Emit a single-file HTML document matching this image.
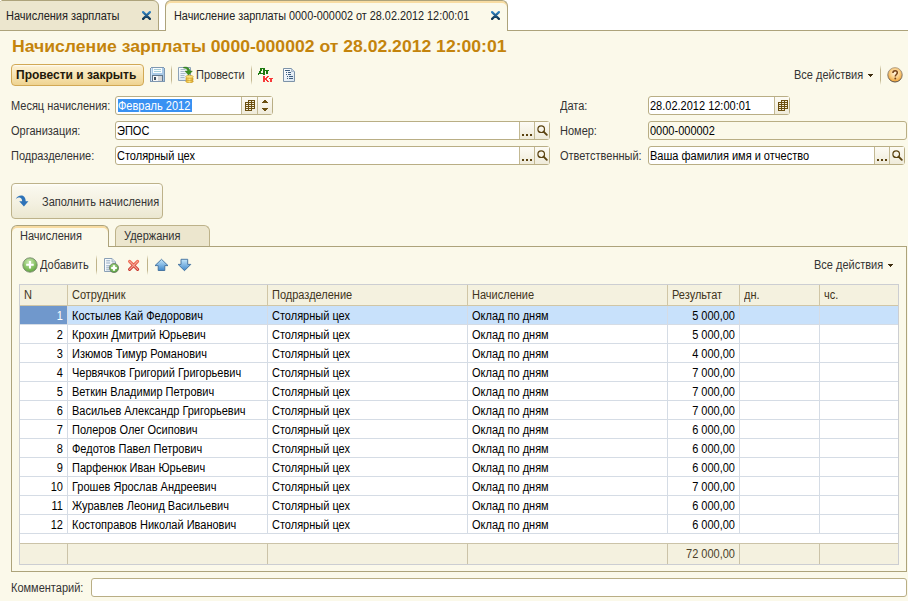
<!DOCTYPE html>
<html><head><meta charset="utf-8">
<style>
*{box-sizing:border-box;margin:0;padding:0}
html,body{width:908px;height:601px;overflow:hidden}
body{position:relative;background:#FBF9EA;font-family:"Liberation Sans",sans-serif;font-size:12px;color:#333;line-height:13px}
.a{position:absolute;white-space:nowrap}
.t{position:absolute;white-space:nowrap;font-size:12px;line-height:13px;transform:scaleX(0.917);transform-origin:0 0}
.t.r{text-align:right;transform-origin:100% 0}
.sep{position:absolute;width:1px;background:linear-gradient(rgba(190,175,130,0),#BFB38A 25%,#BFB38A 75%,rgba(190,175,130,0))}
</style></head><body>

<div class="a" style="left:0px;top:0px;width:908px;height:31px;background:#fff;border-bottom:1px solid #ADA37B"></div>
<div class="a" style="left:-6px;top:0px;width:165px;height:31px;border:1px solid #ADA37B;border-radius:6px 6px 0 0;background:#ECE6CE"></div>
<div class="a" style="left:0px;top:0px;width:1px;height:1px;background:#fff"></div>
<div class="a" style="left:1px;top:0px;width:1px;height:1px;background:#D6CEB0"></div>
<div class="a" style="left:0px;top:1px;width:1px;height:1px;background:#D6CEB0"></div>
<div class="t" style="left:6px;top:10px;color:#222;">Начисления зарплаты</div>
<svg class="a" style="left:142px;top:11px" width="9" height="9" viewBox="0 0 9 9"><defs><linearGradient id="xg142" x1="0" y1="0" x2="0" y2="1"><stop offset="0" stop-color="#2F82C2"/><stop offset="1" stop-color="#0F3350"/></linearGradient></defs><path d="M1.1 1.1L7.9 7.9M7.9 1.1L1.1 7.9" stroke="url(#xg142)" stroke-width="2.2" stroke-linecap="round"/></svg>
<div class="a" style="left:165px;top:0px;width:343px;height:31px;border:1px solid #ADA37B;border-bottom:none;border-radius:6px 6px 0 0;background:#FBF9EA;box-shadow:inset 0 2px 0 #F8DCA2"></div>
<div class="t" style="left:174px;top:10px;color:#222;transform:scaleX(0.904)">Начисление зарплаты 0000-000002 от 28.02.2012 12:00:01</div>
<svg class="a" style="left:491px;top:11px" width="9" height="9" viewBox="0 0 9 9"><defs><linearGradient id="xg491" x1="0" y1="0" x2="0" y2="1"><stop offset="0" stop-color="#2F82C2"/><stop offset="1" stop-color="#0F3350"/></linearGradient></defs><path d="M1.1 1.1L7.9 7.9M7.9 1.1L1.1 7.9" stroke="url(#xg491)" stroke-width="2.2" stroke-linecap="round"/></svg>
<div class="a" style="left:12px;top:35px;font-size:16.5px;line-height:22px;font-weight:bold;color:#C4840C;transform:scaleX(1.066);transform-origin:0 0">Начисление зарплаты 0000-000002 от 28.02.2012 12:00:01</div>
<div class="a" style="left:11px;top:64px;width:133px;height:22px;border:1px solid #D2A955;border-radius:4px;background:linear-gradient(#FFFDF6 0px,#FBEFCF 2px,#F6E2AE 60%,#EED391)"></div>
<div class="a" style="left:16px;top:69px;font-size:12px;line-height:13px;font-weight:bold;color:#22180A">Провести и закрыть</div>
<svg class="a" style="left:150px;top:67px;shape-rendering:crispEdges" width="15" height="15" viewBox="0 0 15 15">
 <rect x="0" y="0" width="15" height="15" fill="#7F98B2"/>
 <rect x="1" y="1" width="13" height="13" fill="#A9C9E6"/>
 <rect x="1" y="1" width="1" height="13" fill="#D3E5F4"/>
 <rect x="3" y="1" width="9" height="5" fill="#FAFCFD"/>
 <rect x="4" y="2" width="7" height="1" fill="#A6CFD9"/>
 <rect x="4" y="4" width="7" height="1" fill="#A6CFD9"/>
 <rect x="2" y="8" width="11" height="6" fill="#62778C"/>
 <rect x="3" y="9" width="9" height="5" fill="#F6F6F6"/>
 <rect x="8" y="9" width="4" height="5" fill="#D6D6D6"/>
 <rect x="4" y="10" width="2" height="3" fill="#3E4E60"/>
 <rect x="0" y="0" width="1" height="1" fill="#FBF9EC"/><rect x="14" y="0" width="1" height="1" fill="#FBF9EC"/>
</svg>
<div class="sep" style="left:171px;top:65px;height:20px"></div>
<svg class="a" style="left:178px;top:66px" width="16" height="17" viewBox="0 0 16 17">
 <defs><linearGradient id="dg" x1="0" y1="0" x2="0" y2="1"><stop offset="0" stop-color="#FFFFFF"/><stop offset="1" stop-color="#DCE8F3"/></linearGradient>
 <linearGradient id="cg" x1="0" y1="0" x2="1" y2="0"><stop offset="0" stop-color="#E8B830"/><stop offset="0.5" stop-color="#FCE680"/><stop offset="1" stop-color="#D9A020"/></linearGradient></defs>
 <path d="M0.5 1.5H12.5V14.5H0.5Z" fill="url(#dg)" stroke="#8CA2B8"/>
 <path d="M2.5 3.5h5M2.5 5.5h4M2.5 7.5h5M2.5 9.5h4M2.5 11.5h4" stroke="#A9BACB"/>
 <path d="M5.5 1.3C8.8 0.4 11.6 1.8 12 5H14.4L10.6 9.2L6.9 5H9.6C9.3 3.3 7.8 2.2 5.5 2.1Z" fill="#3B8F22" stroke="#2A6E18" stroke-width="0.4"/>
 <ellipse cx="11.5" cy="15.2" rx="3.8" ry="1.5" fill="url(#cg)" stroke="#C89420" stroke-width="0.6"/>
 <ellipse cx="11.5" cy="13" rx="3.8" ry="1.5" fill="url(#cg)" stroke="#C89420" stroke-width="0.6"/>
 <ellipse cx="11.5" cy="10.8" rx="3.8" ry="1.5" fill="#FBE27A" stroke="#C89420" stroke-width="0.6"/>
</svg>
<div class="t" style="left:196px;top:69px;color:#333;">Провести</div>
<div class="sep" style="left:251px;top:65px;height:20px"></div>
<svg class="a" style="left:256px;top:66px;shape-rendering:crispEdges" width="20" height="18" viewBox="0 0 20 18"><g fill="#1C7A10"><rect x="4" y="2" width="5" height="1"/><rect x="4" y="3" width="2" height="1"/><rect x="7" y="3" width="2" height="1"/><rect x="4" y="4" width="2" height="1"/><rect x="7" y="4" width="2" height="1"/><rect x="9" y="4" width="4" height="1"/><rect x="3" y="5" width="2" height="1"/><rect x="7" y="5" width="2" height="1"/><rect x="10" y="5" width="2" height="1"/><rect x="3" y="6" width="2" height="1"/><rect x="7" y="6" width="2" height="1"/><rect x="10" y="6" width="2" height="1"/><rect x="2" y="7" width="7" height="1"/><rect x="10" y="7" width="2" height="1"/><rect x="2" y="8" width="1" height="1"/><rect x="7" y="8" width="2" height="1"/></g><g fill="#F83A3A"><rect x="7" y="10" width="2" height="1"/><rect x="11" y="10" width="2" height="1"/><rect x="7" y="11" width="2" height="1"/><rect x="10" y="11" width="2" height="1"/><rect x="7" y="12" width="4" height="1"/><rect x="13" y="12" width="4" height="1"/><rect x="7" y="13" width="4" height="1"/><rect x="14" y="13" width="2" height="1"/><rect x="7" y="14" width="2" height="1"/><rect x="10" y="14" width="2" height="1"/><rect x="14" y="14" width="2" height="1"/><rect x="7" y="15" width="2" height="1"/><rect x="11" y="15" width="2" height="1"/><rect x="14" y="15" width="2" height="1"/></g></svg>
<svg class="a" style="left:283px;top:68px" width="12" height="14" viewBox="0 0 12 14">
 <defs><linearGradient id="dg2" x1="0" y1="0" x2="1" y2="1"><stop offset="0" stop-color="#FFFFFF"/><stop offset="1" stop-color="#D6E4F0"/></linearGradient></defs>
 <path d="M0.5 0.5H8.5L11.5 3.5V13.5H0.5Z" fill="url(#dg2)" stroke="#7D93A8"/>
 <path d="M8.5 0.5V3.5H11.5" fill="#C8D6E4" stroke="#9DB0C2" stroke-width="0.8"/>
 <g fill="#3E5E80" style="shape-rendering:crispEdges"><rect x="2" y="2" width="5" height="1"/><rect x="3" y="4" width="1" height="1"/><rect x="5" y="4" width="3" height="1"/><rect x="3" y="6" width="1" height="1"/><rect x="5" y="6" width="3" height="1"/><rect x="4" y="8" width="1" height="1"/><rect x="6" y="8" width="4" height="1"/><rect x="4" y="10" width="1" height="1"/><rect x="6" y="10" width="4" height="1"/></g>
</svg>
<div class="t" style="left:794px;top:69px;color:#333;">Все действия</div>
<svg class="a" style="left:868px;top:74px;shape-rendering:crispEdges" width="5" height="3" viewBox="0 0 5 3"><g fill="#3E2E10"><rect x="0" y="0" width="5" height="1"/><rect x="1" y="1" width="3" height="1"/><rect x="2" y="2" width="1" height="1"/></g></svg>
<div class="sep" style="left:880px;top:65px;height:20px"></div>
<svg class="a" style="left:882px;top:62px" width="24" height="26" viewBox="882 62 24 26">
 <defs><radialGradient id="hg" cx="0.5" cy="0.4" r="0.6"><stop offset="0" stop-color="#FFF3DE"/><stop offset="0.55" stop-color="#F9CD84"/><stop offset="1" stop-color="#EE9E30"/></radialGradient>
 <linearGradient id="hb" x1="0" y1="0" x2="0" y2="1"><stop offset="0" stop-color="#B8A890"/><stop offset="1" stop-color="#585048"/></linearGradient></defs>
 <circle cx="895" cy="74.8" r="7.2" fill="url(#hg)" stroke="url(#hb)" stroke-width="1"/>
 <path d="M892.9 73.1C892.9 71.4 894 70.7 895.1 70.7C896.4 70.7 897.3 71.6 897.3 72.7C897.3 74.4 895.3 74.6 895.3 76.6" fill="none" stroke="#76441A" stroke-width="1.5"/>
 <circle cx="895.3" cy="78.5" r="0.95" fill="#76441A"/>
</svg>
<div class="t" style="left:11px;top:100px;color:#333;">Месяц начисления:</div>
<div class="t" style="left:11px;top:125px;color:#333;">Организация:</div>
<div class="t" style="left:11px;top:150px;color:#333;">Подразделение:</div>
<div class="a" style="left:115px;top:96px;width:158px;height:19px;border:1px solid #B9AE85;border-radius:3px;background:#fff"></div>
<div class="a" style="left:118px;top:99px;width:74px;height:13px;background:#3891F2"></div>
<div class="t" style="left:118px;top:100px;color:#fff;">Февраль 2012</div>
<div class="a" style="left:241px;top:97px;width:16px;height:17px;border-left:1px solid #C3B993;background:linear-gradient(#FDFBF4,#EFEBDA)"></div>
<div class="a" style="left:257px;top:97px;width:15px;height:17px;border-left:1px solid #C3B993;background:linear-gradient(#FDFBF4,#EFEBDA)"></div>
<svg class="a" style="left:245px;top:100px;shape-rendering:crispEdges" width="10" height="11" viewBox="0 0 10 11"><path d="M3 0H10V9H7V11H0V2H3Z" fill="#6B4F10"/><g fill="#F4EEDC"><rect x="4" y="1" width="2" height="1"/><rect x="7" y="1" width="2" height="1"/><rect x="1" y="3" width="2" height="1"/><rect x="4" y="3" width="2" height="1"/><rect x="7" y="3" width="2" height="1"/><rect x="1" y="5" width="2" height="1"/><rect x="4" y="5" width="2" height="1"/><rect x="7" y="5" width="2" height="1"/><rect x="1" y="7" width="2" height="1"/><rect x="4" y="7" width="2" height="1"/><rect x="7" y="7" width="2" height="1"/><rect x="1" y="9" width="2" height="1"/><rect x="4" y="9" width="2" height="1"/></g></svg>
<svg class="a" style="left:262px;top:100px;shape-rendering:crispEdges" width="6" height="11" viewBox="0 0 6 11"><g fill="#6B4F10"><rect x="2" y="0" width="2" height="1"/><rect x="1" y="1" width="4" height="1"/><rect x="0" y="2" width="6" height="1"/><rect x="0" y="8" width="6" height="1"/><rect x="1" y="9" width="4" height="1"/><rect x="2" y="10" width="2" height="1"/></g></svg>
<div class="a" style="left:115px;top:121px;width:435px;height:19px;border:1px solid #B9AE85;border-radius:3px;background:#fff"></div>
<div class="t" style="left:117px;top:125px;color:#000;">ЭПОС</div>
<div class="a" style="left:519px;top:122px;width:15px;height:17px;border-left:1px solid #C3B993;background:linear-gradient(#FDFBF4,#EFEBDA)"></div>
<div class="a" style="left:534px;top:122px;width:15px;height:17px;border-left:1px solid #C3B993;background:linear-gradient(#FDFBF4,#EFEBDA)"></div>
<svg class="a" style="left:522px;top:134px;shape-rendering:crispEdges" width="11" height="2" viewBox="0 0 11 2"><g fill="#5A4210"><rect x="0" y="0" width="2" height="2"/><rect x="4" y="0" width="2" height="2"/><rect x="8" y="0" width="2" height="2"/></g></svg>
<svg class="a" style="left:537px;top:125px" width="11" height="11" viewBox="0 0 11 11"><circle cx="4.2" cy="4.2" r="3.3" fill="none" stroke="#5A4210" stroke-width="1.2"/><path d="M6.6 6.6L9.8 9.8" stroke="#5A4210" stroke-width="1.9" stroke-linecap="round"/></svg>
<div class="a" style="left:115px;top:146px;width:435px;height:19px;border:1px solid #B9AE85;border-radius:3px;background:#fff"></div>
<div class="t" style="left:117px;top:150px;color:#000;">Столярный цех</div>
<div class="a" style="left:519px;top:147px;width:15px;height:17px;border-left:1px solid #C3B993;background:linear-gradient(#FDFBF4,#EFEBDA)"></div>
<div class="a" style="left:534px;top:147px;width:15px;height:17px;border-left:1px solid #C3B993;background:linear-gradient(#FDFBF4,#EFEBDA)"></div>
<svg class="a" style="left:522px;top:159px;shape-rendering:crispEdges" width="11" height="2" viewBox="0 0 11 2"><g fill="#5A4210"><rect x="0" y="0" width="2" height="2"/><rect x="4" y="0" width="2" height="2"/><rect x="8" y="0" width="2" height="2"/></g></svg>
<svg class="a" style="left:537px;top:150px" width="11" height="11" viewBox="0 0 11 11"><circle cx="4.2" cy="4.2" r="3.3" fill="none" stroke="#5A4210" stroke-width="1.2"/><path d="M6.6 6.6L9.8 9.8" stroke="#5A4210" stroke-width="1.9" stroke-linecap="round"/></svg>
<div class="t" style="left:560px;top:100px;color:#333;">Дата:</div>
<div class="t" style="left:560px;top:125px;color:#333;">Номер:</div>
<div class="t" style="left:560px;top:150px;color:#333;">Ответственный:</div>
<div class="a" style="left:648px;top:96px;width:142px;height:19px;border:1px solid #B9AE85;border-radius:3px;background:#fff"></div>
<div class="t" style="left:650px;top:100px;color:#000;">28.02.2012 12:00:01</div>
<div class="a" style="left:774px;top:97px;width:15px;height:17px;border-left:1px solid #C3B993;background:linear-gradient(#FDFBF4,#EFEBDA)"></div>
<svg class="a" style="left:778px;top:100px;shape-rendering:crispEdges" width="10" height="11" viewBox="0 0 10 11"><path d="M3 0H10V9H7V11H0V2H3Z" fill="#6B4F10"/><g fill="#F4EEDC"><rect x="4" y="1" width="2" height="1"/><rect x="7" y="1" width="2" height="1"/><rect x="1" y="3" width="2" height="1"/><rect x="4" y="3" width="2" height="1"/><rect x="7" y="3" width="2" height="1"/><rect x="1" y="5" width="2" height="1"/><rect x="4" y="5" width="2" height="1"/><rect x="7" y="5" width="2" height="1"/><rect x="1" y="7" width="2" height="1"/><rect x="4" y="7" width="2" height="1"/><rect x="7" y="7" width="2" height="1"/><rect x="1" y="9" width="2" height="1"/><rect x="4" y="9" width="2" height="1"/></g></svg>
<div class="a" style="left:648px;top:121px;width:259px;height:19px;border:1px solid #B9AE85;border-radius:3px;background:#FBF9EA"></div>
<div class="t" style="left:650px;top:125px;color:#000;">0000-000002</div>
<div class="a" style="left:648px;top:146px;width:257px;height:19px;border:1px solid #B9AE85;border-radius:3px;background:#fff"></div>
<div class="t" style="left:650px;top:150px;color:#000;">Ваша фамилия имя и отчество</div>
<div class="a" style="left:874px;top:147px;width:15px;height:17px;border-left:1px solid #C3B993;background:linear-gradient(#FDFBF4,#EFEBDA)"></div>
<div class="a" style="left:889px;top:147px;width:15px;height:17px;border-left:1px solid #C3B993;background:linear-gradient(#FDFBF4,#EFEBDA)"></div>
<svg class="a" style="left:877px;top:159px;shape-rendering:crispEdges" width="11" height="2" viewBox="0 0 11 2"><g fill="#5A4210"><rect x="0" y="0" width="2" height="2"/><rect x="4" y="0" width="2" height="2"/><rect x="8" y="0" width="2" height="2"/></g></svg>
<svg class="a" style="left:892px;top:150px" width="11" height="11" viewBox="0 0 11 11"><circle cx="4.2" cy="4.2" r="3.3" fill="none" stroke="#5A4210" stroke-width="1.2"/><path d="M6.6 6.6L9.8 9.8" stroke="#5A4210" stroke-width="1.9" stroke-linecap="round"/></svg>
<div class="a" style="left:11px;top:183px;width:152px;height:36px;border:1px solid #BDB28A;border-radius:4px;background:linear-gradient(#FFFFFA 0px,#FAF8EE 3px,#F3F0E0 60%,#EBE7D0)"></div>
<svg class="a" style="left:13px;top:192px" width="18" height="18" viewBox="0 0 18 18">
 <path d="M2.6 7.4C3.8 4.2 7.6 2.6 10.3 3.9C12 4.8 12.7 6.9 12.7 9.3L15.4 9.3L10.9 14.6L6.2 9.3L9.1 9.3C9.1 7.6 8.6 6.4 7.6 5.9C6 5.1 4 5.8 2.6 7.4Z" fill="#2D72B8"/>
</svg>
<div class="t" style="left:42px;top:196px;color:#333;">Заполнить начисления</div>
<div class="a" style="left:115px;top:225px;width:95px;height:22px;border:1px solid #BDB28A;border-bottom:none;border-radius:6px 6px 0 0;background:#ECE6CE"></div>
<div class="t" style="left:124px;top:230px;color:#333;">Удержания</div>
<div class="a" style="left:11px;top:246px;width:896px;height:326px;border:1px solid #ADA37B;background:#FBF9EA"></div>
<div class="a" style="left:11px;top:225px;width:98px;height:22px;border:1px solid #ADA37B;border-bottom:none;border-radius:6px 6px 0 0;background:#FBF9EA;box-shadow:inset 0 2px 0 #F8DCA2"></div>
<div class="t" style="left:20px;top:230px;color:#333;">Начисления</div>
<svg class="a" style="left:22px;top:257px" width="16" height="16" viewBox="0 0 16 16">
 <defs><radialGradient id="pg" cx="0.45" cy="0.3" r="0.75"><stop offset="0" stop-color="#CDEBB5"/><stop offset="0.6" stop-color="#86C062"/><stop offset="1" stop-color="#5A9E3C"/></radialGradient></defs>
 <circle cx="8" cy="8" r="7.2" fill="url(#pg)" stroke="#7A8A72" stroke-width="0.9"/>
 <path d="M8 4v7.5M4.2 7.8h7.5" stroke="#fff" stroke-width="2.1"/>
</svg>
<div class="t" style="left:40px;top:259px;color:#333;">Добавить</div>
<div class="sep" style="left:96px;top:255px;height:20px"></div>
<svg class="a" style="left:104px;top:258px" width="16" height="16" viewBox="0 0 16 16">
 <path d="M0.5 0.5H8L11.5 4V13.5H0.5Z" fill="#F6F9FC" stroke="#8AA0B6"/>
 <path d="M8 0.5V4H11.5" fill="#D0DCE8" stroke="#9DB0C2" stroke-width="0.8"/>
 <path d="M2.2 2.8h4M2.2 5h4M2.2 7.8h4M2.2 9.8h3M2.2 11.8h3" stroke="#90A8C0"/>
 <defs><radialGradient id="cpg" cx="0.45" cy="0.35" r="0.7"><stop offset="0" stop-color="#A8DA88"/><stop offset="1" stop-color="#4E9A34"/></radialGradient></defs>
 <circle cx="10" cy="10" r="4.6" fill="url(#cpg)" stroke="#6A7A66" stroke-width="0.8"/>
 <path d="M10 7.2v5.6M7.2 10h5.6" stroke="#fff" stroke-width="2.2"/>
</svg>
<svg class="a" style="left:127px;top:259px" width="13" height="13" viewBox="0 0 13 13">
 <defs><linearGradient id="xr" x1="0" y1="0" x2="0" y2="1"><stop offset="0" stop-color="#F06A50"/><stop offset="1" stop-color="#C8362E"/></linearGradient></defs><path d="M2.6 2.4L10.6 10.4M10.6 2.4L2.6 10.4" stroke="url(#xr)" stroke-width="3.1" stroke-linecap="round"/>
 <path d="M2.6 2.4L10.6 10.4M10.6 2.4L2.6 10.4" stroke="#F5A898" stroke-width="1.1" stroke-linecap="round"/>
</svg>
<div class="sep" style="left:147px;top:255px;height:20px"></div>
<svg class="a" style="left:154px;top:258px" width="40" height="14" viewBox="154 258 40 14">
 <defs><linearGradient id="ag" x1="0" y1="0" x2="0" y2="1"><stop offset="0" stop-color="#C4E6FB"/><stop offset="1" stop-color="#3F88CC"/></linearGradient></defs>
 <path d="M161.5 259.3L168 265.6H164.8V270.5H158.2V265.6H155Z" fill="url(#ag)" stroke="#3F6E9C" stroke-width="0.9" stroke-linejoin="round"/>
 <path d="M184.5 270.7L190.8 264.4H187.7V259.3H181V264.4H178.1Z" fill="url(#ag)" stroke="#3F6E9C" stroke-width="0.9" stroke-linejoin="round"/>
</svg>
<div class="t" style="left:814px;top:259px;color:#333;">Все действия</div>
<svg class="a" style="left:888px;top:264px;shape-rendering:crispEdges" width="5" height="3" viewBox="0 0 5 3"><g fill="#3E2E10"><rect x="0" y="0" width="5" height="1"/><rect x="1" y="1" width="3" height="1"/><rect x="2" y="2" width="1" height="1"/></g></svg>
<div class="a" style="left:19px;top:284px;width:880px;height:281px;border:1px solid #CCCED2;background:#fff"></div>
<div class="a" style="left:20px;top:285px;width:878px;height:21px;background:#F4F1DF;border-bottom:1px solid #D0C6A6"></div>
<div class="a" style="left:20px;top:543px;width:878px;height:21px;background:#F4F1DF;border-top:1px solid #CBC3A8"></div>
<div class="a" style="left:67px;top:285px;width:1px;height:20px;background:#D0C6A6"></div>
<div class="a" style="left:67px;top:544px;width:1px;height:20px;background:#CBC3A8"></div>
<div class="a" style="left:267px;top:285px;width:1px;height:20px;background:#D0C6A6"></div>
<div class="a" style="left:267px;top:544px;width:1px;height:20px;background:#CBC3A8"></div>
<div class="a" style="left:467px;top:285px;width:1px;height:20px;background:#D0C6A6"></div>
<div class="a" style="left:467px;top:544px;width:1px;height:20px;background:#CBC3A8"></div>
<div class="a" style="left:667px;top:285px;width:1px;height:20px;background:#D0C6A6"></div>
<div class="a" style="left:667px;top:544px;width:1px;height:20px;background:#CBC3A8"></div>
<div class="a" style="left:739px;top:285px;width:1px;height:20px;background:#D0C6A6"></div>
<div class="a" style="left:739px;top:544px;width:1px;height:20px;background:#CBC3A8"></div>
<div class="a" style="left:819px;top:285px;width:1px;height:20px;background:#D0C6A6"></div>
<div class="a" style="left:819px;top:544px;width:1px;height:20px;background:#CBC3A8"></div>
<div class="t" style="left:24px;top:289px;color:#3F3420;">N</div>
<div class="t" style="left:72px;top:289px;color:#3F3420;">Сотрудник</div>
<div class="t" style="left:272px;top:289px;color:#3F3420;">Подразделение</div>
<div class="t" style="left:472px;top:289px;color:#3F3420;">Начисление</div>
<div class="t" style="left:672px;top:289px;color:#3F3420;">Результат</div>
<div class="t" style="left:744px;top:289px;color:#3F3420;">дн.</div>
<div class="t" style="left:824px;top:289px;color:#3F3420;">чс.</div>
<div class="a" style="left:20px;top:306px;width:878px;height:18px;background:#C8E1FB"></div>
<div class="a" style="left:20px;top:306px;width:47px;height:18px;background:#7098CC"></div>
<div class="a" style="left:20px;top:324px;width:878px;height:1px;background:#D5DCE5"></div>
<div class="a" style="left:20px;top:343px;width:878px;height:1px;background:#D5DCE5"></div>
<div class="a" style="left:20px;top:362px;width:878px;height:1px;background:#D5DCE5"></div>
<div class="a" style="left:20px;top:381px;width:878px;height:1px;background:#D5DCE5"></div>
<div class="a" style="left:20px;top:400px;width:878px;height:1px;background:#D5DCE5"></div>
<div class="a" style="left:20px;top:419px;width:878px;height:1px;background:#D5DCE5"></div>
<div class="a" style="left:20px;top:438px;width:878px;height:1px;background:#D5DCE5"></div>
<div class="a" style="left:20px;top:457px;width:878px;height:1px;background:#D5DCE5"></div>
<div class="a" style="left:20px;top:476px;width:878px;height:1px;background:#D5DCE5"></div>
<div class="a" style="left:20px;top:495px;width:878px;height:1px;background:#D5DCE5"></div>
<div class="a" style="left:20px;top:514px;width:878px;height:1px;background:#D5DCE5"></div>
<div class="a" style="left:20px;top:533px;width:878px;height:1px;background:#D5DCE5"></div>
<div class="a" style="left:67px;top:306px;width:1px;height:228px;background:#D5DCE5"></div>
<div class="a" style="left:267px;top:306px;width:1px;height:228px;background:#D5DCE5"></div>
<div class="a" style="left:467px;top:306px;width:1px;height:228px;background:#D5DCE5"></div>
<div class="a" style="left:667px;top:306px;width:1px;height:228px;background:#D5DCE5"></div>
<div class="a" style="left:739px;top:306px;width:1px;height:228px;background:#D5DCE5"></div>
<div class="a" style="left:819px;top:306px;width:1px;height:228px;background:#D5DCE5"></div>
<div class="t r" style="left:-237px;top:310px;width:300px;color:#fff;">1</div>
<div class="t" style="left:72px;top:310px;color:#000;">Костылев Кай Федорович</div>
<div class="t" style="left:272px;top:310px;color:#000;">Столярный цех</div>
<div class="t" style="left:472px;top:310px;color:#000;">Оклад по дням</div>
<div class="t r" style="left:435px;top:310px;width:300px;color:#000;">5 000,00</div>
<div class="t r" style="left:-237px;top:329px;width:300px;color:#000;">2</div>
<div class="t" style="left:72px;top:329px;color:#000;">Крохин Дмитрий Юрьевич</div>
<div class="t" style="left:272px;top:329px;color:#000;">Столярный цех</div>
<div class="t" style="left:472px;top:329px;color:#000;">Оклад по дням</div>
<div class="t r" style="left:435px;top:329px;width:300px;color:#000;">5 000,00</div>
<div class="t r" style="left:-237px;top:348px;width:300px;color:#000;">3</div>
<div class="t" style="left:72px;top:348px;color:#000;">Изюмов Тимур Романович</div>
<div class="t" style="left:272px;top:348px;color:#000;">Столярный цех</div>
<div class="t" style="left:472px;top:348px;color:#000;">Оклад по дням</div>
<div class="t r" style="left:435px;top:348px;width:300px;color:#000;">4 000,00</div>
<div class="t r" style="left:-237px;top:367px;width:300px;color:#000;">4</div>
<div class="t" style="left:72px;top:367px;color:#000;">Червячков Григорий Григорьевич</div>
<div class="t" style="left:272px;top:367px;color:#000;">Столярный цех</div>
<div class="t" style="left:472px;top:367px;color:#000;">Оклад по дням</div>
<div class="t r" style="left:435px;top:367px;width:300px;color:#000;">7 000,00</div>
<div class="t r" style="left:-237px;top:386px;width:300px;color:#000;">5</div>
<div class="t" style="left:72px;top:386px;color:#000;">Веткин Владимир Петрович</div>
<div class="t" style="left:272px;top:386px;color:#000;">Столярный цех</div>
<div class="t" style="left:472px;top:386px;color:#000;">Оклад по дням</div>
<div class="t r" style="left:435px;top:386px;width:300px;color:#000;">7 000,00</div>
<div class="t r" style="left:-237px;top:405px;width:300px;color:#000;">6</div>
<div class="t" style="left:72px;top:405px;color:#000;">Васильев Александр Григорьевич</div>
<div class="t" style="left:272px;top:405px;color:#000;">Столярный цех</div>
<div class="t" style="left:472px;top:405px;color:#000;">Оклад по дням</div>
<div class="t r" style="left:435px;top:405px;width:300px;color:#000;">7 000,00</div>
<div class="t r" style="left:-237px;top:424px;width:300px;color:#000;">7</div>
<div class="t" style="left:72px;top:424px;color:#000;">Полеров Олег Осипович</div>
<div class="t" style="left:272px;top:424px;color:#000;">Столярный цех</div>
<div class="t" style="left:472px;top:424px;color:#000;">Оклад по дням</div>
<div class="t r" style="left:435px;top:424px;width:300px;color:#000;">6 000,00</div>
<div class="t r" style="left:-237px;top:443px;width:300px;color:#000;">8</div>
<div class="t" style="left:72px;top:443px;color:#000;">Федотов Павел Петрович</div>
<div class="t" style="left:272px;top:443px;color:#000;">Столярный цех</div>
<div class="t" style="left:472px;top:443px;color:#000;">Оклад по дням</div>
<div class="t r" style="left:435px;top:443px;width:300px;color:#000;">6 000,00</div>
<div class="t r" style="left:-237px;top:462px;width:300px;color:#000;">9</div>
<div class="t" style="left:72px;top:462px;color:#000;">Парфенюк Иван Юрьевич</div>
<div class="t" style="left:272px;top:462px;color:#000;">Столярный цех</div>
<div class="t" style="left:472px;top:462px;color:#000;">Оклад по дням</div>
<div class="t r" style="left:435px;top:462px;width:300px;color:#000;">6 000,00</div>
<div class="t r" style="left:-237px;top:481px;width:300px;color:#000;">10</div>
<div class="t" style="left:72px;top:481px;color:#000;">Грошев Ярослав Андреевич</div>
<div class="t" style="left:272px;top:481px;color:#000;">Столярный цех</div>
<div class="t" style="left:472px;top:481px;color:#000;">Оклад по дням</div>
<div class="t r" style="left:435px;top:481px;width:300px;color:#000;">7 000,00</div>
<div class="t r" style="left:-237px;top:500px;width:300px;color:#000;">11</div>
<div class="t" style="left:72px;top:500px;color:#000;">Журавлев Леонид Васильевич</div>
<div class="t" style="left:272px;top:500px;color:#000;">Столярный цех</div>
<div class="t" style="left:472px;top:500px;color:#000;">Оклад по дням</div>
<div class="t r" style="left:435px;top:500px;width:300px;color:#000;">6 000,00</div>
<div class="t r" style="left:-237px;top:519px;width:300px;color:#000;">12</div>
<div class="t" style="left:72px;top:519px;color:#000;">Костоправов Николай Иванович</div>
<div class="t" style="left:272px;top:519px;color:#000;">Столярный цех</div>
<div class="t" style="left:472px;top:519px;color:#000;">Оклад по дням</div>
<div class="t r" style="left:435px;top:519px;width:300px;color:#000;">6 000,00</div>
<div class="t r" style="left:435px;top:548px;width:300px;color:#4A3F2A;">72 000,00</div>
<div class="t" style="left:11px;top:582px;color:#333;">Комментарий:</div>
<div class="a" style="left:91px;top:578px;width:816px;height:19px;border:1px solid #B9AE85;border-radius:3px;background:#fff"></div>
</body></html>
